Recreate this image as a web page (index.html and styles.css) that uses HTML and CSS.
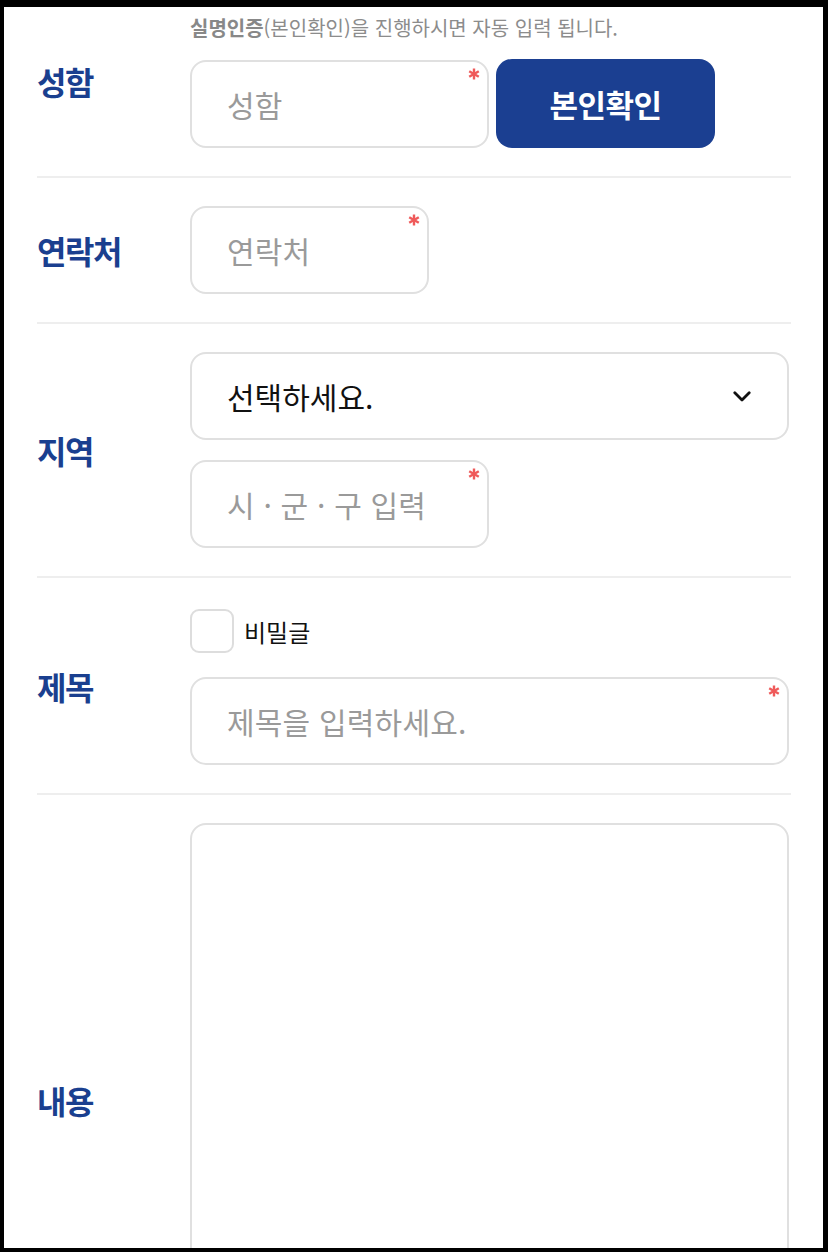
FILE: index.html
```html
<!DOCTYPE html>
<html lang="ko">
<head>
<meta charset="utf-8">
<title>문의 작성</title>
<link rel="stylesheet" href="styles.css">
</head>
<body>
<div class="screen">
  <form class="form">
    <div class="row row-first">
      <div class="label">성함</div>
      <div class="field">
        <p class="helper"><b>실명인증</b>(본인확인)을 진행하시면 자동 입력 됩니다.</p>
        <div class="inline">
          <div class="box box-name">
            <input class="input" type="text" placeholder="성함">
            <svg class="req" viewBox="0 0 12 12" aria-hidden="true"><g stroke="#ef5a5a" stroke-width="2.4"><line x1="6" y1="0.5" x2="6" y2="11.5"/><line x1="1.2" y1="3.2" x2="10.8" y2="8.8"/><line x1="1.2" y1="8.8" x2="10.8" y2="3.2"/></g></svg>
          </div>
          <button type="button" class="btn">본인확인</button>
        </div>
      </div>
    </div>

    <div class="row">
      <div class="label">연락처</div>
      <div class="field">
        <div class="box box-phone">
          <input class="input" type="text" placeholder="연락처">
          <svg class="req" viewBox="0 0 12 12" aria-hidden="true"><g stroke="#ef5a5a" stroke-width="2.4"><line x1="6" y1="0.5" x2="6" y2="11.5"/><line x1="1.2" y1="3.2" x2="10.8" y2="8.8"/><line x1="1.2" y1="8.8" x2="10.8" y2="3.2"/></g></svg>
        </div>
      </div>
    </div>

    <div class="row">
      <div class="label">지역</div>
      <div class="field stack">
        <div class="select">
          <span>선택하세요.</span>
          <svg class="chev" viewBox="0 0 18 11" aria-hidden="true"><polyline points="1.8,1.8 9,9 16.2,1.8" fill="none" stroke="#111" stroke-width="2.8" stroke-linecap="round" stroke-linejoin="round"/></svg>
        </div>
        <div class="box box-city">
          <input class="input" type="text" placeholder="시 · 군 · 구 입력">
          <svg class="req" viewBox="0 0 12 12" aria-hidden="true"><g stroke="#ef5a5a" stroke-width="2.4"><line x1="6" y1="0.5" x2="6" y2="11.5"/><line x1="1.2" y1="3.2" x2="10.8" y2="8.8"/><line x1="1.2" y1="8.8" x2="10.8" y2="3.2"/></g></svg>
        </div>
      </div>
    </div>

    <div class="row">
      <div class="label">제목</div>
      <div class="field">
        <label class="check">
          <input class="checkbox" type="checkbox">
          <span>비밀글</span>
        </label>
        <div class="box box-full">
          <input class="input" type="text" placeholder="제목을 입력하세요.">
          <svg class="req" viewBox="0 0 12 12" aria-hidden="true"><g stroke="#ef5a5a" stroke-width="2.4"><line x1="6" y1="0.5" x2="6" y2="11.5"/><line x1="1.2" y1="3.2" x2="10.8" y2="8.8"/><line x1="1.2" y1="8.8" x2="10.8" y2="3.2"/></g></svg>
        </div>
      </div>
    </div>

    <div class="row row-last">
      <div class="label">내용</div>
      <div class="field">
        <textarea class="textarea"></textarea>
      </div>
    </div>
  </form>
</div>
</body>
</html>
```

FILE: styles.css
```css
html, body {
  margin: 0;
  padding: 0;
  background: #000;
}

body {
  font-family: "Noto Sans CJK KR", "Noto Sans", sans-serif;
  color: #111;
}

.screen {
  margin: 7px 5px 0 4px;
  height: 1241px;
  background: #fff;
  overflow: hidden;
}

.form {
  padding: 0 32px 0 33px;
}

.row {
  display: grid;
  grid-template-columns: 153px 599px;
  align-items: center;
  padding: 28px 0;
  border-bottom: 2px solid #eeeeee;
}

.row-first {
  padding-top: 7px;
}

.row-last {
  border-bottom: none;
}

.label {
  font-size: 32px;
  font-weight: 700;
  color: #1a3f8f;
  letter-spacing: -1.5px;
  line-height: 40px;
}

.field {
  display: flex;
  flex-direction: column;
  align-items: flex-start;
}

.stack {
  gap: 20px;
}

.helper {
  margin: 0 0 18px;
  font-size: 20px;
  line-height: 28px;
  color: #8c8c8c;
  letter-spacing: 0;
  white-space: nowrap;
}

.helper b {
  font-weight: 700;
  color: #888888;
}

.inline {
  display: flex;
  gap: 7px;
}

.box {
  position: relative;
  height: 88px;
  box-sizing: border-box;
}

.box-name { width: 299px; }
.box-phone { width: 239px; }
.box-city { width: 299px; }
.box-full { width: 599px; }

.input {
  display: block;
  width: 100%;
  height: 100%;
  box-sizing: border-box;
  margin: 0;
  padding: 0 20px 0 35px;
  border: 2px solid #e0e0e0;
  border-radius: 16px;
  background: #fff;
  font-family: "Noto Sans CJK KR", "Noto Sans", sans-serif;
  font-size: 30px;
  letter-spacing: 0.2px;
  color: #111;
  outline: none;
}

.input::placeholder {
  color: #9a9a9a;
  opacity: 1;
}

.req {
  position: absolute;
  top: 8px;
  right: 9px;
  width: 12px;
  height: 12px;
}

.btn {
  width: 219px;
  height: 89px;
  margin: -1px 0 0;
  border: none;
  border-radius: 16px;
  background: #1b3f91;
  color: #fff;
  font-family: "Noto Sans CJK KR", "Noto Sans", sans-serif;
  font-size: 31px;
  font-weight: 700;
  letter-spacing: -0.5px;
  cursor: pointer;
}

.select {
  width: 599px;
  height: 88px;
  box-sizing: border-box;
  display: flex;
  align-items: center;
  justify-content: space-between;
  padding: 0 36px 0 35px;
  border: 2px solid #e0e0e0;
  border-radius: 16px;
  font-size: 30px;
  letter-spacing: 0;
  color: #111;
}

.chev {
  width: 18px;
  height: 11px;
}

.check {
  display: flex;
  align-items: center;
  gap: 10px;
  height: 50px;
  margin-bottom: 21px;
  font-size: 24px;
  letter-spacing: 0;
  color: #111;
}

.checkbox {
  appearance: none;
  -webkit-appearance: none;
  width: 44px;
  height: 44px;
  margin: 0;
  box-sizing: border-box;
  border: 2px solid #dddddd;
  border-radius: 9px;
  background: #fff;
}

.textarea {
  display: block;
  width: 599px;
  height: 554px;
  box-sizing: border-box;
  margin: 0;
  border: 2px solid #e0e0e0;
  border-radius: 16px;
  resize: none;
  background: #fff;
}
```
